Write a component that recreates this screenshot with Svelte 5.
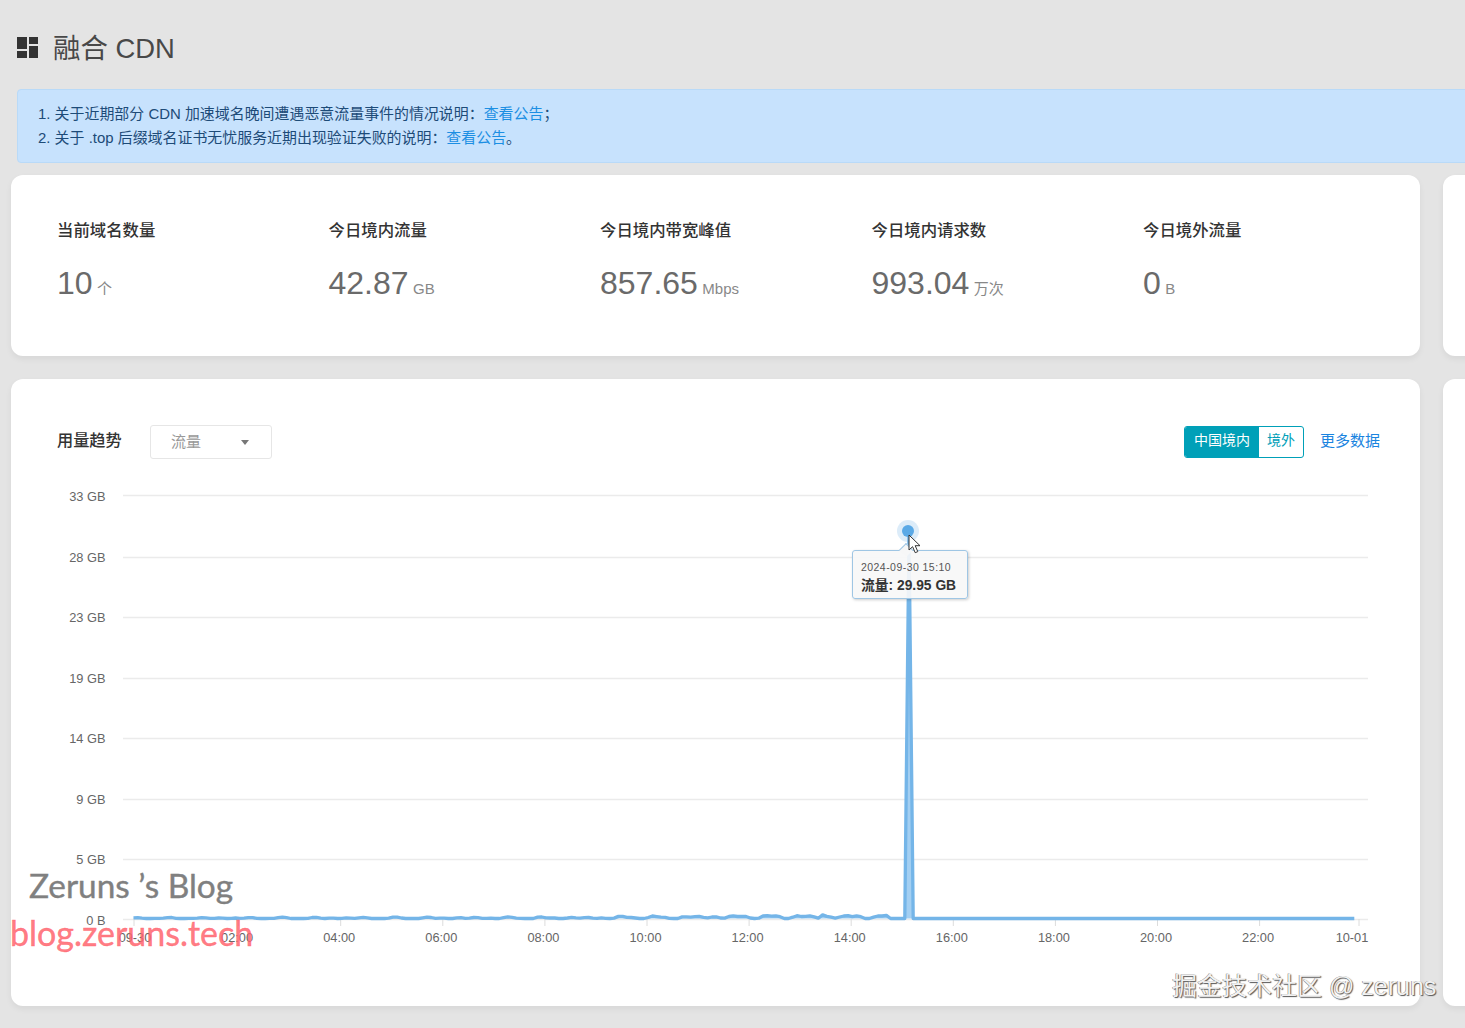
<script>
  const stats = [
    { label: '当前域名数量', value: '10', unit: '个' },
    { label: '今日境内流量', value: '42.87', unit: 'GB' },
    { label: '今日境内带宽峰值', value: '857.65', unit: 'Mbps' },
    { label: '今日境内请求数', value: '993.04', unit: '万次' },
    { label: '今日境外流量', value: '0', unit: 'B' }
  ];
  const grid = [
    { y: 495, ty: 501, t: '33 GB' }, { y: 557, ty: 561.5, t: '28 GB' }, { y: 617, ty: 622, t: '23 GB' }, { y: 678, ty: 683, t: '19 GB' },
    { y: 738, ty: 743, t: '14 GB' }, { y: 799, ty: 804, t: '9 GB' }, { y: 859, ty: 863.5, t: '5 GB' }, { y: 919, ty: 924.5, t: '0 B' }
  ];
  const xl = ['09-30','02:00','04:00','06:00','08:00','10:00','12:00','14:00','16:00','18:00','20:00','22:00'];
  const ticks = xl.map((t, i) => ({ t, x: 135 + i * 102.1 }));
  const X0 = 133.5, DX = 4.2535, BASE = 918.5;
  let pts = [];
  for (let i = 0; i < 288; i++) {
    let v = 0;
    if (i < 178) {
      const k = i / 178;
      v = 0.4 + 0.7 * Math.sin(i * 1.3) * Math.sin(i * 0.37 + 1) + 0.45 * Math.sin(i * 0.71 + 2);
      v *= 0.7 + k * 0.9;
      if (i > 112) v *= 1.5;
      if (i > 130) v += 0.6;
      if (i === 162) v = 3.6;
      if (i === 156 || i === 168) v = 2.8;
      if (v < 0) v = 0;
    }
    let x = X0 + i * DX;
    if (i === 181) x = 904.8;
    if (i === 182) { v = BASE - 531; x = 909; }
    if (i === 183) x = 913.2;
    pts.push([x, BASE - v]);
  }
  const line = pts.map((p, i) => (i ? 'L' : 'M') + p[0].toFixed(1) + ' ' + p[1].toFixed(1)).join(' ');
  const area = line + ` L${pts[287][0].toFixed(1)} ${BASE} L${X0} ${BASE} Z`;
</script>

<div class="page">
  <header class="title">
    <svg class="ico" viewBox="0 0 21 21" width="21" height="21" aria-hidden="true">
      <path d="M0 0h10v12H0zM12 0h9v7h-9zM0 14h10v7H0zM12 9h9v12h-9z" fill="#333" />
    </svg>
    <h1>融合 CDN</h1>
  </header>

  <div class="alert">
    <p>1. 关于近期部分 CDN 加速域名晚间遭遇恶意流量事件的情况说明：<a href="#a">查看公告</a>；</p>
    <p>2. 关于 .top 后缀域名证书无忧服务近期出现验证失败的说明：<a href="#b">查看公告</a>。</p>
  </div>

  <div class="cols">
    <section class="card stats">
      {#each stats as s}
        <div class="stat">
          <div class="label">{s.label}</div>
          <div class="val"><span class="num">{s.value}</span> <span class="unit">{s.unit}</span></div>
        </div>
      {/each}
    </section>
    <section class="card"></section>

    <section class="card trend">
      <div class="head">
        <span class="h-label">用量趋势</span>
        <div class="select"><span>流量</span><i class="caret"></i></div>
        <div class="spacer"></div>
        <div class="toggle"><span class="on">中国境内</span><span class="off">境外</span></div>
        <a class="more" href="#m">更多数据</a>
      </div>
      <div class="chart">
        <svg viewBox="11 459 1409 547" width="1409" height="547" aria-hidden="false">
          {#each grid as g}
            <line x1="123" x2="1368" y1={g.y + 0.5} y2={g.y + 0.5} stroke="#ebebeb" stroke-width="1.5" />
            <text x="105.5" y={g.ty} text-anchor="end" class="ax">{g.t}</text>
          {/each}
          {#each ticks as k, i}
            <line x1={i === 0 ? 134 : k.x + 1.5} x2={i === 0 ? 134 : k.x + 1.5} y1="919" y2="926" stroke="#dcdcdc" />
            <text x={k.x} y="942" text-anchor="middle" class="ax">{k.t}</text>
          {/each}
          <line x1="1359" x2="1359" y1="919" y2="926" stroke="#dcdcdc" />
          <text x="1352" y="942" text-anchor="middle" class="ax">10-01</text>
          <path d={area} fill="#a3cff2" />
          <path d={line} fill="none" stroke="#74b5e8" stroke-width="3.3" stroke-linejoin="round" />
          <circle cx="908" cy="531" r="11" fill="#74b5e8" fill-opacity="0.25" />
          <circle cx="908" cy="531" r="6" fill="#5aa9e6" />
        </svg>
        <div class="tip">
          <div class="d">2024-09-30 15:10</div>
          <div class="v">流量: 29.95 GB</div>
        </div>
        <svg class="cursor" viewBox="0 0 14 21" width="14" height="21" aria-hidden="true">
          <path d="M1 1v15l3.6-3.3 2.6 6 2.6-1.1-2.6-5.9H12z" fill="#fff" stroke="#333" stroke-width="1" stroke-linejoin="round" />
        </svg>
      </div>
    </section>
    <section class="card"></section>
  </div>

  <div class="wm wm1">Zeruns ’s Blog</div>
  <div class="wm wm2">blog.zeruns.tech</div>
  <div class="wm wm3">掘金技术社区 @ zeruns</div>
</div>

<style>
  :global(body) { margin: 0; background: #e4e4e4; overflow: hidden; }
  .page {
    position: relative;
    width: 1465px;
    height: 1028px;
    overflow: hidden;
    background: #e4e4e4;
    font-family: "Liberation Sans", "Noto Sans CJK SC", sans-serif;
    color: #333;
  }
  .title { display: flex; align-items: center; gap: 15px; height: 89px; padding: 8px 0 0 17px; box-sizing: border-box; }
  .ico { flex: none; margin-top: -2px; }
  h1 { margin: 0; font-size: 27.4px; font-weight: 400; color: #484848; line-height: 36px; }
  .alert {
    margin-left: 17px;
    width: 1600px;
    height: 74px;
    box-sizing: border-box;
    padding: 12px 20px;
    background: #c7e2fd;
    border: 1px solid #b9daf8;
    border-radius: 4px;
    font-size: 14.95px;
    line-height: 24px;
    color: #1d4b78;
  }
  .alert p { margin: 0; white-space: nowrap; }
  .alert a { color: #1c8fe3; text-decoration: none; }
  .cols {
    display: grid;
    grid-template-columns: 1409px 400px;
    grid-template-rows: 181px 627px;
    gap: 23px;
    margin: 12px 0 0 11px;
  }
  .card { background: #fff; border-radius: 12px; box-shadow: 0 3px 6px rgba(0, 0, 0, 0.06); }
  .stats { display: grid; grid-template-columns: repeat(5, 271.5px); padding: 43px 0 0 46px; box-sizing: border-box; }
  .label { font-size: 16.4px; line-height: 24px; font-weight: 500; color: #333; }
  .val { margin-top: 19px; line-height: 44px; white-space: nowrap; color: #6a6a6a; }
  .num { font-size: 32px; }
  .unit { font-size: 15px; color: #888; }
  .head { display: flex; align-items: center; height: 34px; margin-top: 46px; padding: 0 40px 0 46px; }
  .h-label { font-size: 16.2px; font-weight: 500; width: 93px; margin-top: -6px; }
  .select {
    display: flex; align-items: center; justify-content: space-between;
    width: 122px; height: 34px; box-sizing: border-box;
    padding: 0 22px 0 20px;
    border: 1px solid #e6e6e6; border-radius: 3px;
    font-size: 15px; color: #999;
  }
  .select span { margin-top: -3px; }
  .caret { width: 0; height: 0; border: 4px solid transparent; border-top: 5px solid #777; border-bottom: 0; }
  .spacer { flex: 1; }
  .toggle {
    display: flex; width: 120px; height: 32px; box-sizing: border-box;
    border: 1px solid #00a0b8; border-radius: 3px; overflow: hidden;
    font-size: 14px; line-height: 27px; text-align: center; margin-top: -1px;
  }
  .on { flex: none; width: 74px; background: #00a0b8; color: #fff; }
  .off { flex: 1; color: #00a0b8; }
  .more { margin: -6px 0 0 16px; font-size: 15px; color: #1a84e0; text-decoration: none; }
  .chart { position: relative; height: 547px; }
  .chart > svg:first-child { display: block; }
  .ax { font-size: 12.8px; fill: #666; font-family: "Liberation Sans", sans-serif; }
  .tip {
    position: absolute; left: 841px; top: 91px;
    width: 116px; height: 49px; box-sizing: border-box;
    padding: 8px 0 0 8px;
    background: rgba(247, 247, 247, 0.92);
    border: 1.5px solid #9fc6e4; border-radius: 3px;
    box-shadow: 1px 1px 3px rgba(0, 0, 0, 0.2);
    white-space: nowrap;
  }
  .tip::before {
    content: ""; position: absolute; left: 48px; top: -6px;
    width: 9px; height: 9px; background: #f7f7f7;
    border-left: 1.5px solid #9fc6e4; border-top: 1.5px solid #9fc6e4;
    transform: rotate(45deg);
  }
  .d { font-size: 10.5px; line-height: 16px; color: #555; letter-spacing: 0.45px; }
  .v { font-size: 13.8px; line-height: 18px; margin-top: 2px; font-weight: 700; color: #333; }
  .cursor { position: absolute; left: 897px; top: 75px; }
  .wm { position: absolute; white-space: nowrap; pointer-events: none; }
  .wm1 { left: 29px; top: 862px; font-family: "Lato", sans-serif; font-size: 33.4px; line-height: 46px; color: #808080; -webkit-text-stroke: 0.4px #808080; }
  .wm2 { left: 10px; top: 910px; font-family: "Lato", sans-serif; font-size: 34px; line-height: 46px; color: rgba(255, 100, 110, 0.85); -webkit-text-stroke: 0.4px rgba(255, 100, 110, 0.85); }
  .wm3 {
    left: 1172px; top: 968px; font-size: 25px; line-height: 36px; color: #f2f2f2;
    text-shadow: 1px 1px 1px #555, -0.5px -0.5px 0 #777;
  }
</style>
